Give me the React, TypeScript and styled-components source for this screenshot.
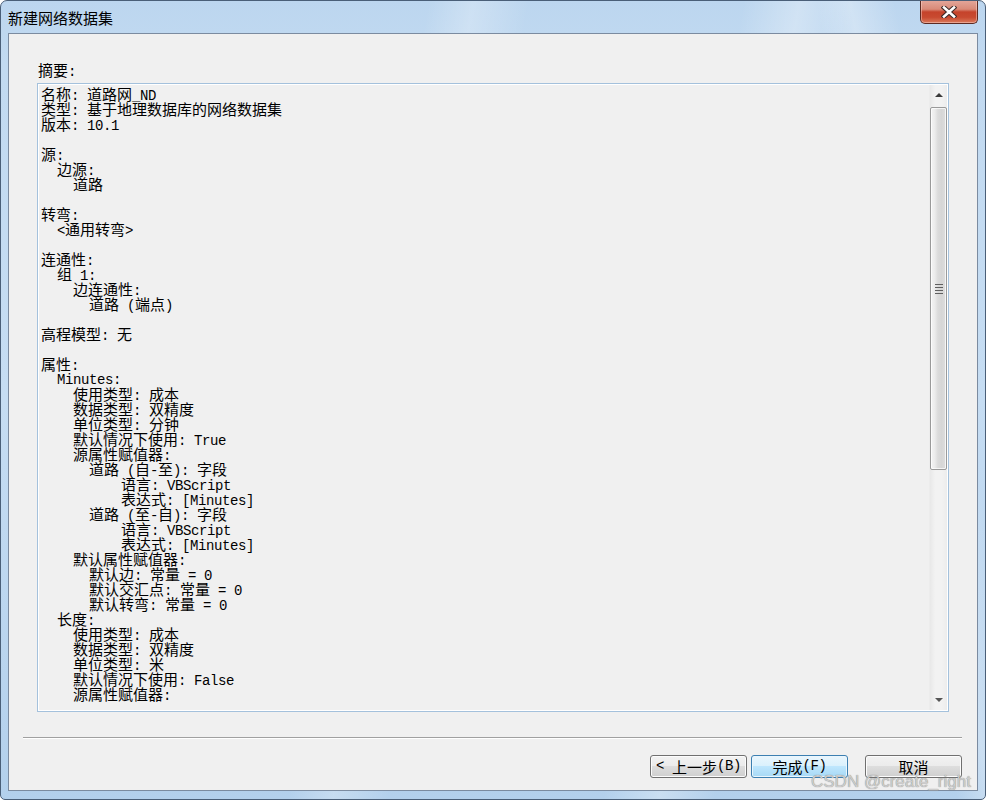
import styled, { createGlobalStyle } from 'styled-components';

const GlobalStyle = createGlobalStyle`
  html, body {
    margin: 0;
    padding: 0;
    background: #ffffff;
  }
  * {
    box-sizing: border-box;
  }
`;

const summary = [
  '名称: 道路网_ND',
  '类型: 基于地理数据库的网络数据集',
  '版本: 10.1',
  '',
  '源:',
  '  边源:',
  '    道路',
  '',
  '转弯:',
  '  <通用转弯>',
  '',
  '连通性:',
  '  组 1:',
  '    边连通性:',
  '      道路 (端点)',
  '',
  '高程模型: 无',
  '',
  '属性:',
  '  Minutes:',
  '    使用类型: 成本',
  '    数据类型: 双精度',
  '    单位类型: 分钟',
  '    默认情况下使用: True',
  '    源属性赋值器:',
  '      道路 (自-至): 字段',
  '          语言: VBScript',
  '          表达式: [Minutes]',
  '      道路 (至-自): 字段',
  '          语言: VBScript',
  '          表达式: [Minutes]',
  '    默认属性赋值器:',
  '      默认边: 常量 = 0',
  '      默认交汇点: 常量 = 0',
  '      默认转弯: 常量 = 0',
  '  长度:',
  '    使用类型: 成本',
  '    数据类型: 双精度',
  '    单位类型: 米',
  '    默认情况下使用: False',
  '    源属性赋值器:',
];

const Window = styled.div`
  position: relative;
  display: flex;
  flex-direction: column;
  width: 986px;
  height: 800px;
  border: 1px solid #4a5f78;
  border-radius: 7px 7px 5px 5px;
  background:
    linear-gradient(100deg, transparent 0 38%, rgba(255, 255, 255, 0.25) 42%, transparent 47%),
    linear-gradient(100deg, transparent 0 66%, rgba(255, 255, 255, 0.3) 71%, transparent 76%),
    linear-gradient(80deg, transparent 0 85%, rgba(255, 255, 255, 0.3) 88%, transparent 92%),
    linear-gradient(to bottom, #bcd6ef 0%, #c2daf1 8%, #c6ddf3 50%, #b3d0ec 100%);
  overflow: hidden;
`;

const TitleBar = styled.div`
  display: flex;
  align-items: flex-start;
  height: 32px;
  flex: none;
`;

const Title = styled.div`
  padding: 8px 0 0 7px;
  font-family: 'Noto Sans CJK SC', sans-serif;
  font-size: 15px;
  line-height: 17px;
  color: #000;
`;

const CloseButton = styled.div`
  display: flex;
  align-items: center;
  justify-content: center;
  margin: -1px 7px 0 auto;
  width: 58px;
  height: 24px;
  border: 1px solid #5c2a22;
  border-top: none;
  border-radius: 0 0 5px 5px;
  background: linear-gradient(
    to bottom,
    #e4a89c 0%,
    #d98a78 40%,
    #c5432b 52%,
    #c84a30 75%,
    #da7a5c 100%
  );
  box-shadow: inset 0 0 0 1px rgba(255, 220, 210, 0.45);
`;

const Client = styled.div`
  flex: 1;
  display: flex;
  flex-direction: column;
  margin: 0 7px 8px 7px;
  border: 1px solid #7b8ba0;
  background: #f0f0f0;
`;

const Latin = styled.span`
  font-family: 'Liberation Mono', monospace;
  font-size: 14px;
  letter-spacing: -0.4px;
`;

const Han = styled.span`
  font-family: 'Noto Sans CJK SC', sans-serif;
  font-size: 15px;
`;

const Label = styled.div`
  margin: 28px 0 0 29px;
  height: 15px;
  line-height: 15px;
  white-space: pre;
  color: #000;
`;

const TextBox = styled.div`
  display: flex;
  margin: 6px 0 0 28px;
  width: 912px;
  height: 629px;
  border: 1px solid #a4c1dc;
  box-shadow: inset 0 0 0 1px #ffffff;
  background: #f0f0f0;
`;

const TextContent = styled.div`
  flex: 1;
  padding: 2px 0 0 3px;
  overflow: hidden;
`;

const Line = styled.div`
  height: 15px;
  line-height: 15px;
  white-space: pre;
  color: #000;
`;

const ScrollBar = styled.div`
  display: flex;
  flex-direction: column;
  width: 18px;
  margin: 1px 1px 1px 0;
  background: linear-gradient(to right, #e8e8e8, #f2f2f2 30%, #f2f2f2 70%, #ececec);
  border-left: 1px solid #ececec;
`;

const ArrowButton = styled.div`
  display: flex;
  align-items: center;
  justify-content: center;
  height: 20px;
  flex: none;
`;

const Arrow = styled.div<{ $down?: boolean }>`
  width: 0;
  height: 0;
  border-left: 4px solid transparent;
  border-right: 4px solid transparent;
  ${(p) =>
    p.$down ? 'border-top: 4px solid #555;' : 'border-bottom: 4px solid #3a3a3a;'}
`;

const Track = styled.div`
  flex: 1;
  padding-top: 2px;
`;

const Thumb = styled.div`
  display: flex;
  align-items: center;
  justify-content: center;
  height: 363px;
  border: 1px solid #9a9a9a;
  border-radius: 2px;
  background: linear-gradient(
    to right,
    #f4f4f4 0%,
    #ececec 25%,
    #dcdcdc 45%,
    #d6d6d6 70%,
    #dedede 100%
  );
  box-shadow: inset 0 0 0 1px rgba(255, 255, 255, 0.7);
`;

const Grip = styled.div`
  width: 8px;
  height: 10px;
  background: repeating-linear-gradient(
    to bottom,
    #606060 0 1px,
    transparent 1px 3px
  );
`;

const Separator = styled.div`
  margin: 25px 15px 0 14px;
  height: 2px;
  border-top: 1px solid #a0a0a0;
  border-bottom: 1px solid #ffffff;
`;

const ButtonRow = styled.div`
  display: flex;
  justify-content: flex-end;
  margin: 16px 15px 0 0;
`;

const Button = styled.div<{ $primary?: boolean; $gap?: number }>`
  display: flex;
  align-items: center;
  justify-content: center;
  width: 97px;
  height: 23px;
  margin-left: ${(p) => p.$gap ?? 0}px;
  border: 1px solid ${(p) => (p.$primary ? '#3c7fb1' : '#707070')};
  border-radius: 3px;
  line-height: 15px;
  white-space: pre;
  color: #000;
  background: ${(p) =>
    p.$primary
      ? 'linear-gradient(to bottom, #eaf6fd 0%, #d9f0fc 50%, #bee6fd 50%, #a7d9f5 100%)'
      : 'linear-gradient(to bottom, #f2f2f2 0%, #ebebeb 50%, #dddddd 50%, #cfcfcf 100%)'};
  box-shadow: inset 0 0 0 1px ${(p) => (p.$primary ? '#eaf6fd' : '#fcfcfc')};
`;

const Watermark = styled.div`
  position: absolute;
  left: 810px;
  top: 772px;
  font-family: 'Liberation Sans', Arial, sans-serif;
  font-size: 17px;
  line-height: 17px;
  color: rgba(210, 210, 210, 0.95);
  text-shadow: 0 0 1px #707070;
  white-space: nowrap;
`;

const hanRun = /([\u2E80-\u9FFF\u3000-\u303F\uFF00-\uFFEF]+)/;

const mixed = (text: string) =>
  text
    .split(hanRun)
    .filter((part) => part.length > 0)
    .map((part, i) =>
      hanRun.test(part) ? <Han key={i}>{part}</Han> : <Latin key={i}>{part}</Latin>
    );

const CloseIcon = () => (
  <svg width="16" height="12" viewBox="0 0 16 12">
    <path d="M3 1.5 L13 10.5 M13 1.5 L3 10.5" stroke="#3c2a28" strokeWidth="4.6" strokeLinecap="square" />
    <path d="M3 1.5 L13 10.5 M13 1.5 L3 10.5" stroke="#ffffff" strokeWidth="2.6" strokeLinecap="square" />
  </svg>
);

const App = () => {
  return (
    <>
      <GlobalStyle />
      <Window>
        <TitleBar>
          <Title>新建网络数据集</Title>
          <CloseButton>
            <CloseIcon />
          </CloseButton>
        </TitleBar>
        <Client>
          <Label>{mixed('摘要:')}</Label>
          <TextBox>
            <TextContent>
              {summary.map((line, i) => (
                <Line key={i}>{line ? mixed(line) : ' '}</Line>
              ))}
            </TextContent>
            <ScrollBar>
              <ArrowButton>
                <Arrow />
              </ArrowButton>
              <Track>
                <Thumb>
                  <Grip />
                </Thumb>
              </Track>
              <ArrowButton>
                <Arrow $down />
              </ArrowButton>
            </ScrollBar>
          </TextBox>
          <Separator />
          <ButtonRow>
            <Button>{mixed('< 上一步(B)')}</Button>
            <Button $primary $gap={4}>
              {mixed('完成(F)')}
            </Button>
            <Button $gap={17}>{mixed('取消')}</Button>
          </ButtonRow>
        </Client>
        <Watermark>CSDN @create_right</Watermark>
      </Window>
    </>
  );
};

export default App;
